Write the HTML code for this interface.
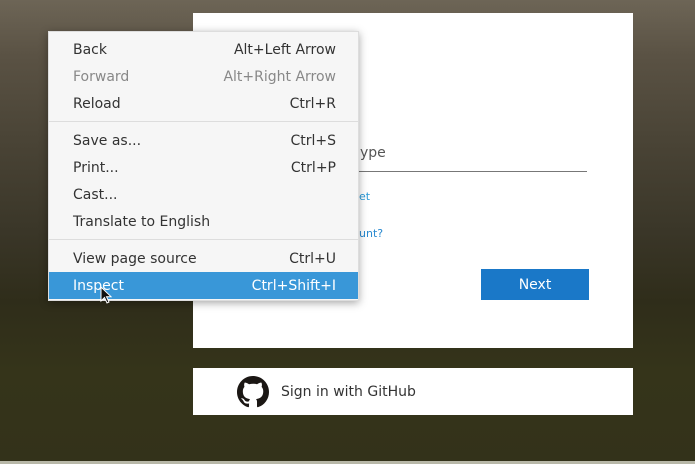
<!DOCTYPE html>
<html><head><meta charset="utf-8"><style>
*{margin:0;padding:0;box-sizing:border-box}
body{width:695px;height:464px;overflow:hidden;position:relative;font-family:"DejaVu Sans","Liberation Sans",sans-serif;
background:linear-gradient(180deg,#6d6556 0%,#5a5244 12%,#4a4436 30%,#3a3628 50%,#2f2d1a 65%,#35341a 80%,#33321a 100%);}
.r{position:absolute}
.card{left:193px;top:13px;width:440px;height:335px;background:#fff}
.gh{left:193px;top:368px;width:440px;height:47px;background:#fff}
.menu{left:48px;top:31px;width:311px;height:270px;background:#f6f6f6;box-shadow:0 2px 8px rgba(0,0,0,.35);border:1px solid #ddd}
.it{position:absolute;left:0;width:309px;height:27px;font-size:14px;line-height:29px;color:#333;padding:0 22px 0 24px}
.it span{float:right}
.dis{color:#888}
.sep{position:absolute;left:0;width:309px;height:1px;background:#ddd}
.hl{background:#3997d8;color:#fff}
</style></head><body>
<div class="r card"></div>
<div class="r" style="left:360px;top:145px;font-size:14px;color:#555">ype</div>
<div class="r" style="left:359px;top:171px;width:228px;height:1px;background:#777"></div>
<div class="r" style="left:359px;top:190px;font-size:11px;color:#2a9ad8">et</div>
<div class="r" style="left:359px;top:227px;font-size:11px;color:#2a8ad0">unt?</div>
<div class="r" style="left:481px;top:269px;width:108px;height:31px;background:#1a78c8;color:#fff;font-size:14px;line-height:33px;text-align:center">Next</div>
<div class="r gh"></div>
<svg class="r" style="left:237px;top:376px" width="32" height="32" viewBox="0 0 16 16"><path fill="#1b1714" d="M8 0C3.58 0 0 3.58 0 8c0 3.54 2.29 6.53 5.47 7.590.4.07.55-.17.55-.38 0-.19-.01-.82-.01-1.49-2.01.37-2.53-.49-2.69-.94-.09-.23-.48-.94-.82-1.13-.28-.15-.68-.52-.01-.53.63-.01 1.08.58 1.23.82.72 1.21 1.87.87 2.33.66.07-.52.28-.87.51-1.07-1.78-.2-3.64-.89-3.64-3.95 0-.87.31-1.59.82-2.15-.08-.2-.36-1.02.08-2.12 0 0 .67-.21 2.2.82.64-.18 1.32-.27 2-.27.68 0 1.36.09 2 .27 1.53-1.04 2.2-.82 2.2-.82.44 1.1.16 1.92.08 2.12.51.56.82 1.27.82 2.15 0 3.07-1.87 3.75-3.65 3.95.29.25.54.73.54 1.48 0 1.07-.01 1.93-.01 2.2 0 .21.15.46.55.38A8.013 8.013 0 0016 8c0-4.42-3.58-8-8-8z"/></svg>
<div class="r" style="left:281px;top:384px;font-size:14px;color:#333">Sign in with GitHub</div>
<div class="r menu">
<div class="it" style="top:4px">Back<span>Alt+Left Arrow</span></div>
<div class="it dis" style="top:31px">Forward<span>Alt+Right Arrow</span></div>
<div class="it" style="top:58px">Reload<span>Ctrl+R</span></div>
<div class="sep" style="top:89px"></div>
<div class="it" style="top:95px">Save as...<span>Ctrl+S</span></div>
<div class="it" style="top:122px">Print...<span>Ctrl+P</span></div>
<div class="it" style="top:149px">Cast...</div>
<div class="it" style="top:176px">Translate to English</div>
<div class="sep" style="top:207px"></div>
<div class="it" style="top:213px">View page source<span>Ctrl+U</span></div>
<div class="it hl" style="top:240px">Inspect<span>Ctrl+Shift+I</span></div>
</div>
<svg class="r" style="left:100px;top:286px" width="12" height="18" viewBox="0 0 12 18"><path d="M1 1v14l3.5-3.5 2.5 5.5 2-1-2.5-5.3H11z" fill="#111" stroke="#fff" stroke-width="1"/></svg>
<div class="r" style="left:0;top:461px;width:695px;height:3px;background:#b8b8a8"></div>
</body></html>
